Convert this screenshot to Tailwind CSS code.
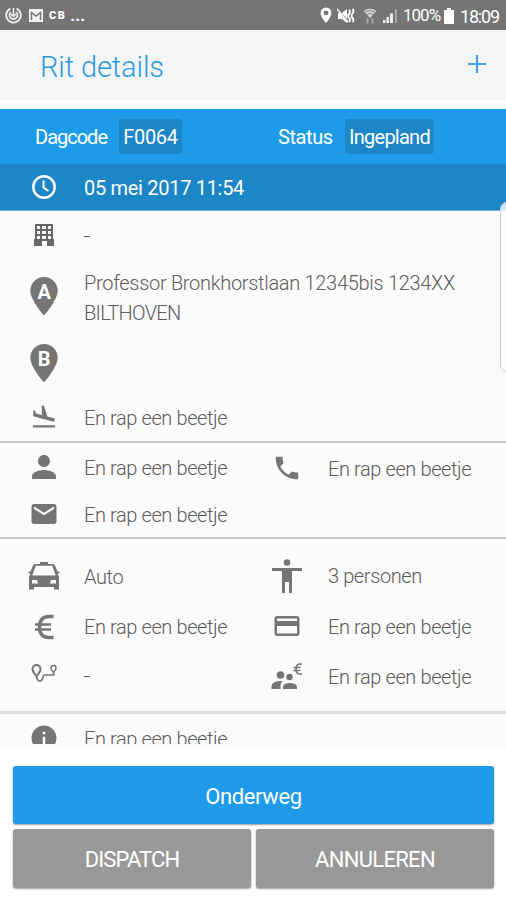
<!DOCTYPE html>
<html lang="nl">
<head>
<meta charset="utf-8">
<title>Rit details</title>
<script src="https://cdn.jsdelivr.net/npm/@tailwindcss/browser@4"></script>
</head>
<body class="bg-white">
<div class="relative flex h-[900px] w-[506px] flex-col overflow-hidden bg-white font-['Roboto','Noto_Sans',sans-serif] text-[20px] font-light text-[#5c5c5c]">

  <!-- Status bar -->
  <div class="flex h-[30px] shrink-0 items-center bg-[#757575] pt-[1px] pr-[6px] pl-[5px] text-white">
    <svg class="h-[17px] w-[17px]" viewBox="0 0 17 17" fill="none" stroke="#eee" stroke-width="1.8"><path d="M5.5 1.6A7.3 7.3 0 1 0 11.5 1.6M5.800 5.200a4 4 0 1 0 5.400 0"/><path d="M8.500 1v8M6 7l2.500 2.500L11 7" stroke-width="1.500"/></svg>
    <svg class="ml-[6px] h-[14px] w-[16px]" viewBox="0 0 16 14"><path fill="#f2f2f2" d="M1 0h14v13H1z"/><path d="M3.500 11V3.500L8 7l4.500-3.500V11" fill="none" stroke="#757575" stroke-width="1.500"/></svg>
    <span class="ml-[5px] text-[11px] leading-none font-black tracking-[1.500px]">CB</span>
    <span class="ml-[4px] pt-[1px] text-[17px] font-bold">...</span>
    <svg class="ml-auto h-[17px] w-[12px]" viewBox="0 0 12 17"><path fill="#fff" fill-rule="evenodd" d="M6 .5A5.400 5.400 0 0 0 .6 6C.6 10 6 16 6 16s5.400-6 5.400-10A5.400 5.400 0 0 0 6 .5zm0 3A2.400 2.400 0 1 1 6 8.300 2.400 2.400 0 0 1 6 3.500z"/></svg>
    <svg class="ml-[5px] h-[16px] w-[18px]" viewBox="0 0 18 16"><path fill="#fff" d="M1 5h4l5-4v14l-5-4H1z"/><path d="M1 2l11 12" stroke="#757575" stroke-width="1.500"/><path d="M0 1l11 13" stroke="#fff" stroke-width="1.300"/><path d="M12 2q2 2 0 4t0 4 0 4M15.500 1q2 2 0 4.500t0 4.500 0 4" stroke="#fff" stroke-width="1.800" fill="none"/></svg>
    <svg class="ml-[8px] h-[16px] w-[14px]" viewBox="0 0 14 16"><path fill="#d5d5d5" d="M7 10L.5 3Q7-1.500 13.500 3z"/><path d="M2 4Q7 1 12 4M4 6.500q3-2 6 0" stroke="#888" fill="none"/><path d="M4.500 10.500v5M9.500 10.500v5" stroke="#aaa" stroke-width="2"/></svg>
    <svg class="ml-[6px] h-[15px] w-[15px]" viewBox="0 0 15 15"><path fill="#eee" d="M0 12h2.500v3H0zM3.500 9H6v6H3.500zM7 5.500h3V15H7z"/><path fill="#a5a5a5" d="M12 1h2v14h-2z"/></svg>
    <span class="ml-[5px] w-[38px] text-[17px] font-normal tracking-[-1px] whitespace-nowrap">100%</span>
    <svg class="ml-[3px] h-[16px] w-[10px]" viewBox="0 0 10 16"><path fill="#fff" d="M3 0h4v2h3v14H0V2h3z"/></svg>
    <span class="ml-[6px] w-[40px] pt-[2px] text-[18px] font-normal tracking-[-1.200px] whitespace-nowrap">18:09</span>
  </div>

  <!-- Title bar -->
  <header class="flex h-[79px] shrink-0 items-start justify-between border-b-[9px] border-white bg-[#f5f5f5] pr-[20px] pl-[40px] text-[#2a9ae0]">
    <h1 class="pt-[17px] text-[29px] leading-[40px] font-light tracking-[-0.1px]">Rit details</h1>
    <svg class="mt-[25px] h-[18px] w-[18px]" viewBox="0 0 18 18"><path d="M9 0v18M0 9h18" stroke="#4b9fe5" stroke-width="2.200"/></svg>
  </header>

  <!-- Summary -->
  <section class="grid h-[55px] shrink-0 grid-cols-[243px_1fr] items-center bg-[#1e9be8] font-normal text-white">
    <div class="flex items-center justify-between pr-[61px] pl-[35px]"><span class="tracking-[-1px]">Dagcode</span><span class="flex h-[35px] w-[63px] items-center justify-center rounded-[3px] bg-[#1c86c7] tracking-[-0.300px]">F0064</span></div>
    <div class="flex items-center justify-between pr-[72px] pl-[35px]"><span class="tracking-[-0.400px]">Status</span><span class="flex h-[35px] w-[89px] items-center justify-center rounded-[3px] bg-[#1c86c7] tracking-[-0.750px]">Ingepland</span></div>
  </section>
  <section class="flex h-[47px] shrink-0 items-center gap-[20px] border-b border-[#75b3dc] bg-[#1c86c7] pl-[24px] font-normal text-white">
    <svg class="h-[30px] w-[40px]" viewBox="0 0 40 30" fill="none" stroke="#fff"><circle cx="20" cy="15" r="10.700" stroke-width="2.500"/><path d="M19.500 8.500v7l5 3.500" stroke-width="2"/></svg>
    <span class="pt-[2px] tracking-[-0.300px]">05 mei 2017 11:54</span>
  </section>

  <main class="h-[533px] shrink-0 overflow-hidden bg-[#fbfbfb] tracking-[-0.400px]">
    <!-- Route -->
    <section class="h-[232px] border-b-2 border-[#c8c8c8]">
      <div class="flex h-[47px] items-center gap-[20px] pl-[24px]">
        <svg class="h-[22px] w-[40px]" viewBox="0 0 40 22"><path fill="#666" fill-rule="evenodd" d="M11 0h18v15h1v7h-7v-5h-5v5h-8v-7h1zm2 2v3h3V2zm5 0v3h4V2zm6 0v3h3V2zM13 7v3h3V7zm5 0v3h4V7zm6 0v3h3V7zM13 12v3h3v-3zm5 0v3h4v-3zm6 0v3h3v-3z"/></svg>
        <span class="scale-x-125 pt-[2px]">-</span>
      </div>
      <div class="flex h-[77px] items-center gap-[20px] pl-[24px]">
        <svg class="mb-[2px] h-[40px] w-[40px]" viewBox="0 0 40 40"><path fill="#757575" d="M20 1A13.700 13.700 0 0 0 6.300 14.700C6.300 24 20 39.500 20 39.500S33.700 24 33.700 14.700A13.700 13.700 0 0 0 20 1z"/><text x="20" y="23" fill="#fff" font-size="20" font-weight="700" text-anchor="middle">A</text></svg>
        <p class="pt-[2px] leading-[30px] tracking-[-0.300px]">Professor Bronkhorstlaan 12345bis 1234XX<br><span class="tracking-[-0.700px]">BILTHOVEN</span></p>
      </div>
      <div class="flex h-[57px] items-center pl-[24px]">
        <svg class="mb-[2px] h-[40px] w-[40px]" viewBox="0 0 40 40"><path fill="#757575" d="M20 1A13.700 13.700 0 0 0 6.300 14.700C6.300 24 20 39.500 20 39.500S33.700 24 33.700 14.700A13.700 13.700 0 0 0 20 1z"/><text x="20" y="23" fill="#fff" font-size="20" font-weight="700" text-anchor="middle">B</text></svg>
      </div>
      <div class="flex h-[50px] items-center gap-[20px] pl-[24px]">
        <svg class="h-[28px] w-[40px]" viewBox="-5 0 34 24" fill="#757575"><path d="M2.500 19h19v2h-19zm7.180-5.730l4.350 1.160 5.310 1.420c.8.210 1.620-.26 1.840-1.060.21-.8-.26-1.620-1.060-1.840l-5.310-1.420-2.760-9.020L10.120 2v8.280L5.150 8.950l-.93-2.320-1.450-.39v5.170l1.600.43 5.310 1.430z"/></svg>
        <span class="pt-[2px]">En rap een beetje</span>
      </div>
    </section>

    <!-- Contact -->
    <section class="grid h-[96px] grid-cols-[243px_243px] grid-rows-[48px_46px] border-b-2 border-[#c8c8c8]">
      <div class="flex items-center gap-[20px] pl-[24px]">
        <svg class="h-[36px] w-[40px]" viewBox="-1.330 0 26.660 24" fill="#757575"><path d="M12 12c2.210 0 4-1.790 4-4s-1.790-4-4-4-4 1.790-4 4 1.790 4 4 4zm0 2c-2.670 0-8 1.340-8 4v2h16v-2c0-2.660-5.330-4-8-4z"/></svg>
        <span class="pt-[2px]">En rap een beetje</span>
      </div>
      <div class="flex items-center gap-[21px] pl-[24px]">
        <svg class="mt-[2px] h-[30px] w-[40px]" viewBox="-4 0 32 24" fill="#757575"><path d="M6.620 10.790c1.440 2.830 3.760 5.140 6.590 6.590l2.200-2.200c.27-.27.67-.36 1.020-.24 1.120.37 2.330.57 3.570.57.55 0 1 .45 1 1V20c0 .55-.45 1-1 1-9.390 0-17-7.610-17-17 0-.55.45-1 1-1h3.500c.55 0 1 .45 1 1 0 1.250.2 2.450.57 3.570.11.35.03.74-.25 1.020l-2.200 2.200z"/></svg>
        <span class="pt-[3px]">En rap een beetje</span>
      </div>
      <div class="flex items-center gap-[20px] pl-[24px]">
        <svg class="h-[30px] w-[40px]" viewBox="-4 0 32 24" fill="#757575"><path d="M20 4H4c-1.100 0-1.990.9-1.990 2L2 18c0 1.100.9 2 2 2h16c1.100 0 2-.9 2-2V6c0-1.100-.9-2-2-2zm0 4l-8 5-8-5V6l8 5 8-5v2z"/></svg>
        <span class="pt-[2px]">En rap een beetje</span>
      </div>
    </section>

    <!-- Ride -->
    <section class="grid h-[175px] grid-cols-[243px_243px] grid-rows-[50px_51px_48px] border-b-[3px] border-[#e0e0e0] pt-[12px]">
      <div class="flex items-center gap-[20px] pl-[24px]">
        <svg class="h-[28px] w-[40px]" viewBox="0 0 40 28"><path fill="#757575" fill-rule="evenodd" d="M16 0h8v2h4.500q2 0 2.700 2l2.600 6 1.200-1 .5 2-2 1 1.500 3v12.500h-5V25H10v2.500H5V15l1.500-3-2-1 .5-2 1.200 1 2.600-6q.7-2 2.700-2H16zM11.800 3.800L8.300 13.500h23.400L28.200 3.800zM8 18v3.500h6L13 18zm24 0v3.500h-6l1-3.500z"/></svg>
        <span class="pt-[1px]">Auto</span>
      </div>
      <div class="flex items-center gap-[21px] pl-[24px]">
        <svg class="h-[35px] w-[40px]" viewBox="0 0 40 35" fill="#757575"><circle cx="20" cy="3.500" r="3.300"/><path d="M5 9h30v3H25v22h-3V23h-4v11h-3V12H5z"/></svg>
        <span>3 personen</span>
      </div>
      <div class="flex items-center gap-[20px] pl-[24px]">
        <svg class="h-[26px] w-[40px]" viewBox="0 0 40 26" fill="none" stroke="#757575" stroke-width="3.300"><path d="M29.500 2.500H25Q15.500 2.500 15.500 13T25 23.500h4.500"/><path d="M11 10.500h16M11 15.500h16" stroke-width="2.500"/></svg>
        <span class="pt-[1px]">En rap een beetje</span>
      </div>
      <div class="flex items-center gap-[21px] pl-[24px]">
        <svg class="mb-[2px] h-[30px] w-[40px]" viewBox="-4 0 32 24" fill="#757575"><path d="M20 4H4c-1.110 0-1.990.89-1.990 2L2 18c0 1.110.89 2 2 2h16c1.110 0 2-.89 2-2V6c0-1.110-.89-2-2-2zm0 14H4v-6h16v6zm0-10H4V6h16v2z"/></svg>
        <span>En rap een beetje</span>
      </div>
      <div class="flex items-center gap-[20px] pl-[24px]">
        <svg class="mb-[6px] h-[20px] w-[40px]" viewBox="0 0 40 20" fill="none" stroke="#757575"><path d="M12.500 13Q8.500 9 8.500 6a4 4 0 0 1 8 0q0 3-4 7z" stroke-width="2"/><path d="M12.500 13q.5 5 3.500 5c4 0 1.500-6 5-6h8.500v-2" stroke-width="1.700"/><path d="M29.500 9.500Q27 7 27 5a2.500 2.500 0 0 1 5 0q0 2-2.500 4.500z" stroke-width="1.500"/></svg>
        <span class="scale-x-125">-</span>
      </div>
      <div class="flex items-center gap-[21px] pl-[24px]">
        <svg class="h-[28px] w-[40px]" viewBox="0 0 40 28" fill="#757575"><circle cx="13.500" cy="13" r="3.800"/><circle cx="22.500" cy="15" r="3.200"/><path d="M4.500 27v-3q1-4.500 8-5h3q-2 2-2 4.500V27zM16 27v-2.500q1-3.500 7-3.500t7 3.500V27z"/><path d="M35 2h-2q-4 0-4 5t4 5h2M26.500 5.500h7M26.500 8.500h7" fill="none" stroke="#757575" stroke-width="1.500"/></svg>
        <span class="pt-[2px]">En rap een beetje</span>
      </div>
    </section>

    <div class="flex h-[50px] items-center gap-[20px] pl-[24px]">
      <svg class="mb-[2px] h-[30px] w-[40px]" viewBox="-4 0 32 24" fill="#757575"><path d="M12 2C6.480 2 2 6.480 2 12s4.480 10 10 10 10-4.480 10-10S17.520 2 12 2zm1 15h-2v-6h2v6zm0-8h-2V7h2v2z"/></svg>
      <span>En rap een beetje</span>
    </div>
  </main>

  <!-- Actions -->
  <footer class="grid grow grid-cols-2 grid-rows-[58px_59px] gap-x-[5px] gap-y-[5px] border-t-[6px] border-[#fbfbfb] pt-[16px] pr-[12px] pl-[13px] text-[22px] font-normal text-white">
    <button class="col-span-2 rounded-[3px] bg-[#1e9be8] pt-[2px] tracking-[-0.400px] shadow-[0_1px_2px_rgba(0,0,0,0.4)]">Onderweg</button>
    <button class="rounded-[3px] bg-[#999] pt-[2px] tracking-[-0.900px] shadow-[0_1px_2px_rgba(0,0,0,0.4)]">DISPATCH</button>
    <button class="rounded-[3px] bg-[#999] pt-[2px] tracking-[-0.700px] shadow-[0_1px_2px_rgba(0,0,0,0.4)]">ANNULEREN</button>
  </footer>

  <!-- Edge panel handle -->
  <div class="absolute top-[202px] -right-[8px] h-[170px] w-[14px] rounded-[8px] border border-[#ccc] bg-white/80"></div>
</div>
</body>
</html>
